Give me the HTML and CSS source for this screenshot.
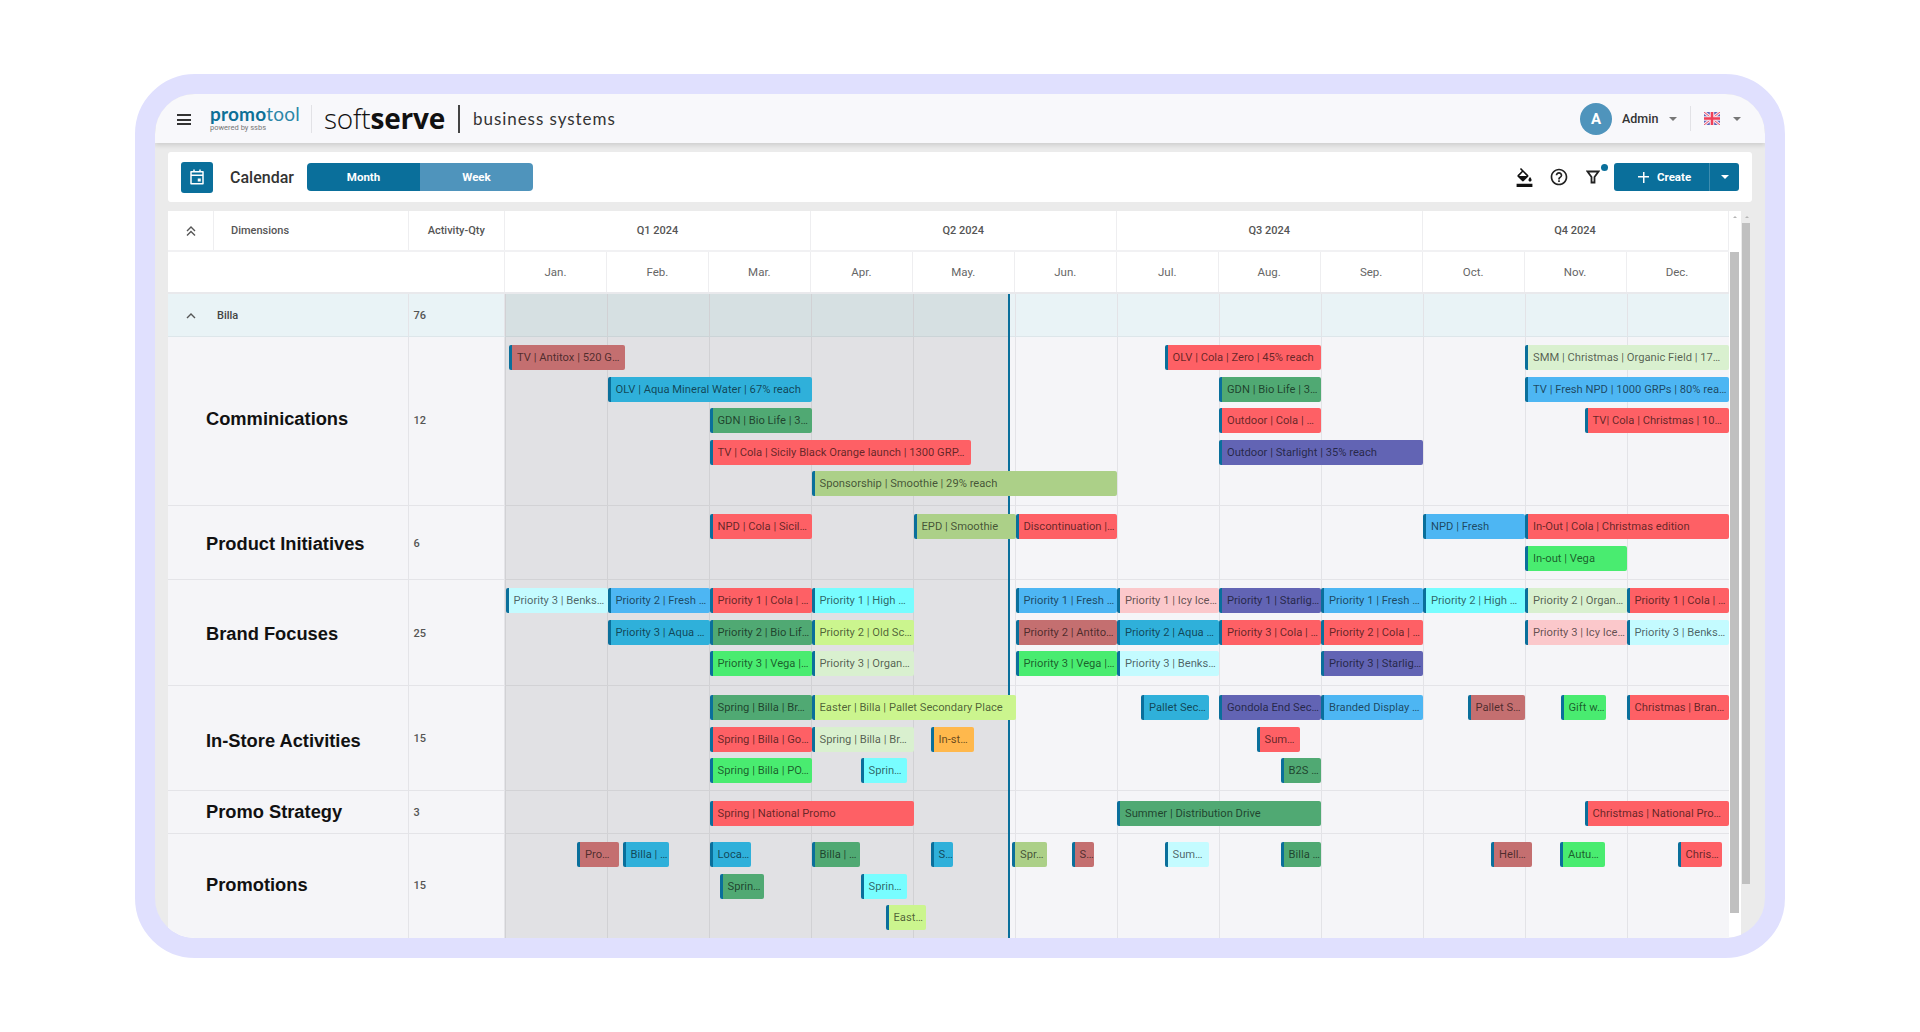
FILE: index.html
```html
<!DOCTYPE html>
<html lang="en">
<head>
<meta charset="utf-8">
<title>Promotool Calendar</title>
<link rel="stylesheet" href="styles.css">
</head>
<body>
<div class="frame">
  <header class="topbar">
    <div class="burger"><span></span><span></span><span></span></div>
    <div class="logo">
      <div class="logo-name"><b>promo</b>tool</div>
      <div class="logo-sub">powered by ssbs</div>
    </div>
    <div class="soft"><span class="soft-light">soft</span><span class="soft-bold">serve</span></div>
    <div class="biz">business systems</div>
    <div class="user">
      <div class="avatar">A</div>
      <div class="user-name">Admin</div>
      <span class="caret"></span>
      <div class="flag">
        <svg width="16" height="13" viewBox="0 0 16 13"><rect width="16" height="13" fill="#5a62b8"/><path d="M0 0L16 13M16 0L0 13" stroke="#f4e4ee" stroke-width="3"/><path d="M0 0L16 13M16 0L0 13" stroke="#f05068" stroke-width="1"/><path d="M8 0V13M0 6.5H16" stroke="#f4e4ee" stroke-width="4.5"/><path d="M8 0V13M0 6.5H16" stroke="#f04058" stroke-width="2.5"/></svg>
      </div>
      <span class="caret"></span>
    </div>
  </header>

  <main class="content">
    <div class="toolbar">
      <div class="cal-icon">
        <svg width="18" height="18" viewBox="0 0 24 24"><path fill="none" stroke="#fff" stroke-width="2" stroke-linejoin="round" d="M4 5h16v16H4zM4 9.500h16M8 2v4M16 2v4"/><rect x="13" y="14" width="4" height="4" fill="#fff"/></svg>
      </div>
      <div class="cal-title">Calendar</div>
      <div class="tabs"><div class="tab tab-on">Month</div><div class="tab">Week</div></div>
      <div class="tools">
        <svg class="ico-bucket" width="19" height="19" viewBox="0 0 24 24"><path fill="#111" d="M16.560 8.940L7.620 0 6.210 1.410l2.380 2.380-5.150 5.150c-.59.59-.59 1.540 0 2.120l5.500 5.500c.29.29.68.44 1.060.44s.77-.15 1.060-.44l5.500-5.500c.59-.58.59-1.530 0-2.120zM5.210 10L10 5.210 14.790 10H5.210zM19 11.500s-2 2.170-2 3.500c0 1.100.9 2 2 2s2-.9 2-2c0-1.330-2-3.500-2-3.500zM2 20h20v4H2z"/></svg>
        <svg class="ico-help" width="20" height="20" viewBox="0 0 24 24"><path fill="#222" d="M11 18h2v-2h-2v2zm1-16C6.480 2 2 6.480 2 12s4.480 10 10 10 10-4.480 10-10S17.520 2 12 2zm0 18c-4.410 0-8-3.590-8-8s3.590-8 8-8 8 3.590 8 8-3.590 8-8 8zm0-14c-2.210 0-4 1.790-4 4h2c0-1.100.9-2 2-2s2 .9 2 2c0 2-3 1.750-3 5h2c0-2.250 3-2.500 3-5 0-2.210-1.790-4-4-4z"/></svg>
        <div class="filter">
          <svg width="14" height="14" viewBox="0 0 14 14"><path fill="none" stroke="#222" stroke-width="1.800" d="M1.500 1.500h11L8.500 7v5.500h-3V7z"/></svg>
          <span class="filter-dot"></span>
        </div>
        <div class="create">
          <div class="create-main"><span class="plus"></span>Create</div>
          <div class="create-drop"><span class="caret caret-white"></span></div>
        </div>
      </div>
    </div>

    <div class="board">
      <div class="table">
        <div class="head head-q">
          <div class="hcell hcell-icon"><svg width="12" height="12" viewBox="0 0 12 12"><path fill="none" stroke="#555" stroke-width="1.400" d="M2 6l4-4 4 4M2 10.500l4-4 4 4"/></svg></div>
          <div class="hcell hcell-dim">Dimensions</div>
          <div class="hcell hcell-qty">Activity-Qty</div>
          <div class="quarters">
            <div class="q">Q1 2024</div><div class="q">Q2 2024</div><div class="q">Q3 2024</div><div class="q">Q4 2024</div>
          </div>
        </div>
        <div class="head head-m">
          <div class="spacer"></div>
          <div class="months">
            <div class="m">Jan.</div><div class="m">Feb.</div><div class="m">Mar.</div><div class="m">Apr.</div><div class="m">May.</div><div class="m">Jun.</div><div class="m">Jul.</div><div class="m">Aug.</div><div class="m">Sep.</div><div class="m">Oct.</div><div class="m">Nov.</div><div class="m">Dec.</div>
          </div>
        </div>

        <div class="body">
          <div class="past"></div>
          <div class="now"></div>

          <div class="row row-billa">
            <div class="label label-billa"><svg class="chev" width="12" height="12" viewBox="0 0 12 12"><path fill="none" stroke="#555" stroke-width="1.400" d="M2 8l4-4 4 4"/></svg>Billa</div>
            <div class="qty">76</div>
            <div class="track"></div>
          </div>

          <div class="row row-comm">
            <div class="label">Comminications</div>
            <div class="qty">12</div>
            <div class="track">
              <div class="lane">
                <div class="bar rosy" style="left:4px;width:116px">TV | Antitox | 520 G…</div>
                <div class="bar red" style="left:659.500px;width:156.500px">OLV | Cola | Zero | 45% reach</div>
                <div class="bar mint" style="left:1020px;width:203.500px">SMM | Christmas | Organic Field | 17…</div>
              </div>
              <div class="lane">
                <div class="bar aqua" style="left:102.500px;width:204px">OLV | Aqua Mineral Water | 67% reach</div>
                <div class="bar green" style="left:714px;width:102px">GDN | Bio Life | 3…</div>
                <div class="bar blue" style="left:1020px;width:203.500px">TV | Fresh NPD | 1000 GRPs | 80% rea…</div>
              </div>
              <div class="lane">
                <div class="bar green" style="left:204.500px;width:102px">GDN | Bio Life | 3…</div>
                <div class="bar red" style="left:714px;width:102px">Outdoor | Cola | …</div>
                <div class="bar red" style="left:1079.500px;width:144px">TV| Cola | Christmas | 10…</div>
              </div>
              <div class="lane">
                <div class="bar red" style="left:204.500px;width:261px">TV | Cola | Sicily Black Orange launch | 1300 GRP…</div>
                <div class="bar purple" style="left:714px;width:204px">Outdoor | Starlight | 35% reach</div>
              </div>
              <div class="lane">
                <div class="bar sage" style="left:306.500px;width:305.500px">Sponsorship | Smoothie | 29% reach</div>
              </div>
            </div>
          </div>

          <div class="row row-prod">
            <div class="label">Product Initiatives</div>
            <div class="qty">6</div>
            <div class="track">
              <div class="lane">
                <div class="bar red" style="left:204.500px;width:102px">NPD | Cola | Sicil…</div>
                <div class="bar sage" style="left:408.500px;width:102px">EPD | Smoothie</div>
                <div class="bar red" style="left:510.500px;width:101.500px">Discontinuation |…</div>
                <div class="bar blue" style="left:918px;width:102px">NPD | Fresh</div>
                <div class="bar red" style="left:1020px;width:203.500px">In-Out | Cola | Christmas edition</div>
              </div>
              <div class="lane">
                <div class="bar bright" style="left:1020px;width:101.500px">In-out | Vega</div>
              </div>
            </div>
          </div>

          <div class="row row-brand">
            <div class="label">Brand Focuses</div>
            <div class="qty">25</div>
            <div class="track">
              <div class="lane">
                <div class="bar ice" style="left:0.500px;width:102px">Priority 3 | Benks…</div>
                <div class="bar blue" style="left:102.500px;width:102px">Priority 2 | Fresh …</div>
                <div class="bar red" style="left:204.500px;width:102px">Priority 1 | Cola | …</div>
                <div class="bar cyan" style="left:306.500px;width:102px">Priority 1 | High …</div>
                <div class="bar blue" style="left:510.500px;width:101.500px">Priority 1 | Fresh …</div>
                <div class="bar pink" style="left:612px;width:102px">Priority 1 | Icy Ice…</div>
                <div class="bar purple" style="left:714px;width:102px">Priority 1 | Starlig…</div>
                <div class="bar blue" style="left:816px;width:102px">Priority 1 | Fresh …</div>
                <div class="bar cyan" style="left:918px;width:102px">Priority 2 | High …</div>
                <div class="bar mint" style="left:1020px;width:101.500px">Priority 2 | Organ…</div>
                <div class="bar red" style="left:1121.500px;width:102px">Priority 1 | Cola | …</div>
              </div>
              <div class="lane">
                <div class="bar aqua" style="left:102.500px;width:102px">Priority 3 | Aqua …</div>
                <div class="bar green" style="left:204.500px;width:102px">Priority 2 | Bio Lif…</div>
                <div class="bar lime" style="left:306.500px;width:102px">Priority 2 | Old Sc…</div>
                <div class="bar rosy" style="left:510.500px;width:101.500px">Priority 2 | Antito…</div>
                <div class="bar aqua" style="left:612px;width:102px">Priority 2 | Aqua …</div>
                <div class="bar red" style="left:714px;width:102px">Priority 3 | Cola | …</div>
                <div class="bar red" style="left:816px;width:102px">Priority 2 | Cola | …</div>
                <div class="bar pink" style="left:1020px;width:101.500px">Priority 3 | Icy Ice…</div>
                <div class="bar ice" style="left:1121.500px;width:102px">Priority 3 | Benks…</div>
              </div>
              <div class="lane">
                <div class="bar bright" style="left:204.500px;width:102px">Priority 3 | Vega |…</div>
                <div class="bar mint" style="left:306.500px;width:102px">Priority 3 | Organ…</div>
                <div class="bar bright" style="left:510.500px;width:101.500px">Priority 3 | Vega |…</div>
                <div class="bar ice" style="left:612px;width:102px">Priority 3 | Benks…</div>
                <div class="bar purple" style="left:816px;width:102px">Priority 3 | Starlig…</div>
              </div>
            </div>
          </div>

          <div class="row row-store">
            <div class="label">In-Store Activities</div>
            <div class="qty">15</div>
            <div class="track">
              <div class="lane">
                <div class="bar green" style="left:204.500px;width:102px">Spring | Billa | Br…</div>
                <div class="bar lime" style="left:306.500px;width:204px">Easter | Billa | Pallet Secondary Place</div>
                <div class="bar aqua" style="left:636px;width:68px">Pallet Sec…</div>
                <div class="bar purple" style="left:714px;width:102px">Gondola End Sec…</div>
                <div class="bar blue" style="left:816px;width:102px">Branded Display …</div>
                <div class="bar rosy" style="left:962.500px;width:57.500px">Pallet S…</div>
                <div class="bar bright" style="left:1055.500px;width:45px">Gift w…</div>
                <div class="bar red" style="left:1121.500px;width:102px">Christmas | Bran…</div>
              </div>
              <div class="lane">
                <div class="bar red" style="left:204.500px;width:102px">Spring | Billa | Go…</div>
                <div class="bar mint" style="left:306.500px;width:102px">Spring | Billa | Br…</div>
                <div class="bar orange" style="left:425.500px;width:43.500px">In-st…</div>
                <div class="bar red" style="left:751.500px;width:43.500px">Sum…</div>
              </div>
              <div class="lane">
                <div class="bar bright" style="left:204.500px;width:102px">Spring | Billa | PO…</div>
                <div class="bar cyan" style="left:355.500px;width:46px">Sprin…</div>
                <div class="bar green" style="left:775.500px;width:40.500px">B2S …</div>
              </div>
            </div>
          </div>

          <div class="row row-promo">
            <div class="label">Promo Strategy</div>
            <div class="qty">3</div>
            <div class="track">
              <div class="lane">
                <div class="bar red" style="left:204.500px;width:204px">Spring | National Promo</div>
                <div class="bar green" style="left:612px;width:204px">Summer | Distribution Drive</div>
                <div class="bar red" style="left:1079.500px;width:144px">Christmas | National Pro…</div>
              </div>
            </div>
          </div>

          <div class="row row-last">
            <div class="label">Promotions</div>
            <div class="qty">15</div>
            <div class="track">
              <div class="lane">
                <div class="bar rosy" style="left:72px;width:42px">Pro…</div>
                <div class="bar aqua" style="left:117.500px;width:46.500px">Billa | …</div>
                <div class="bar aqua" style="left:204.500px;width:41px">Loca…</div>
                <div class="bar green" style="left:306.500px;width:48.500px">Billa | …</div>
                <div class="bar aqua" style="left:425.500px;width:22px">S…</div>
                <div class="bar sage" style="left:507px;width:35px">Spr…</div>
                <div class="bar rosy" style="left:566.500px;width:22px">S…</div>
                <div class="bar ice" style="left:659.500px;width:44.500px">Sum…</div>
                <div class="bar green" style="left:775.500px;width:40.500px">Billa …</div>
                <div class="bar rosy" style="left:986px;width:40.500px">Hell…</div>
                <div class="bar bright" style="left:1055px;width:45px">Autu…</div>
                <div class="bar red" style="left:1172.500px;width:44.500px">Chris…</div>
              </div>
              <div class="lane">
                <div class="bar green" style="left:214.500px;width:44px">Sprin…</div>
                <div class="bar cyan" style="left:355.500px;width:46px">Sprin…</div>
              </div>
              <div class="lane">
                <div class="bar lime" style="left:380.500px;width:40.500px">East…</div>
              </div>
            </div>
          </div>
        </div>
      </div>

      <div class="scroll-inner"><div class="scroll-arrow"></div><div class="thumb-inner"></div></div>
      <div class="scroll-outer"><div class="scroll-arrow"></div><div class="thumb-outer"></div></div>
    </div>
  </main>
</div>
</body>
</html>
```

FILE: styles.css
```css
* { box-sizing: border-box; }
html, body { margin: 0; height: 100%; }
body {
  background: #fff;
  padding: 74px 135px 0;
  font-family: Roboto, "Liberation Sans", sans-serif;
  overflow: hidden;
}
.frame {
  width: 1650px;
  height: 884px;
  border: 20px solid #e0e0fe;
  border-radius: 60px;
  background: #ebebeb;
  overflow: hidden;
  display: flex;
  flex-direction: column;
}
.topbar {
  height: 49px;
  flex: none;
  background: #f8f8fb;
  box-shadow: 0 2px 5px rgba(0,0,0,.14);
  display: flex;
  align-items: center;
  padding-left: 22px;
  position: relative;
  z-index: 5;
}
.burger { width: 14px; display: flex; flex-direction: column; gap: 2.500px; margin-top: 2px; }
.burger span { display: block; height: 2px; background: #333; }
.logo { margin-left: 19px; width: 102px; flex: none; border-right: 1px solid #e2e2e6; height: 28px; display: flex; flex-direction: column; justify-content: center; }
.logo-name { font-family: Lato, sans-serif; font-size: 19px; line-height: 18px; color: #2c87a8; letter-spacing: .2px; font-weight: 400; }
.logo-name b { font-weight: 700; color: #0e7097; }
.logo-sub { font-family: Roboto, sans-serif; font-size: 7.500px; line-height: 9px; color: #777; }
.soft { margin-left: 12px; font-family: "Open Sans", sans-serif; font-size: 28px; color: #111; width: 136px; height: 28px; line-height: 26px; border-right: 2px solid #444; letter-spacing: -.2px; }
.soft-light { font-weight: 300; }
.soft-bold { font-weight: 700; }
.biz { margin-left: 13px; font-family: Lato, sans-serif; font-size: 17px; color: #333; letter-spacing: .95px; }
.user { margin-left: auto; display: flex; align-items: center; margin-right: 24px; }
.avatar { width: 32px; height: 32px; border-radius: 50%; background: #4f94bc; color: #fff; font-weight: 700; font-size: 15px; display: flex; align-items: center; justify-content: center; }
.user-name { margin-left: 10px; font-size: 12.500px; font-weight: 500; color: #333; width: 47px; }
.caret { display: inline-block; width: 0; height: 0; border-left: 4px solid transparent; border-right: 4px solid transparent; border-top: 4px solid #777; }
.caret-white { border-top-color: #fff; }
.flag { margin-left: 13px; padding-left: 13px; margin-right: 13px; border-left: 1px solid #e2e2e6; height: 25px; display: flex; align-items: center; }
.flag svg { display: block; }

.content { flex: 1; min-height: 0; padding: 9px 13px 0; display: flex; flex-direction: column; gap: 9px; }
.toolbar { height: 50px; flex: none; background: #fff; border-radius: 3px; display: flex; align-items: center; padding-left: 13px; }
.cal-icon { width: 32px; height: 31px; background: #0a6f9b; border-radius: 3px; display: flex; align-items: center; justify-content: center; }
.cal-title { margin-left: 17px; font-size: 16px; font-weight: 500; color: #333; width: 77px; }
.tabs { display: flex; width: 226px; height: 28px; border-radius: 4px; overflow: hidden; }
.tab { flex: 1; background: #4f94bc; color: #fff; font-size: 11.500px; font-weight: 700; display: flex; align-items: center; justify-content: center; }
.tab-on { background: #0a6f9b; }
.tools { margin-left: auto; display: flex; align-items: center; margin-right: 13px; }
.ico-bucket { margin-right: 15px; }
.ico-help { margin-right: 17px; }
.filter { position: relative; width: 14px; height: 14px; margin-right: 14px; display: flex; }
.filter-dot { position: absolute; left: 15px; top: -6px; width: 7px; height: 7px; border-radius: 50%; background: #0a6f9b; }
.create { display: flex; width: 125px; height: 28px; background: #0a6f9b; border-radius: 3px; color: #fff; font-size: 11.500px; font-weight: 700; }
.create-main { width: 96px; display: flex; align-items: center; padding-left: 24px; border-right: 1px solid #3d8db0; }
.plus { width: 11px; height: 11px; margin-right: 8px; background: linear-gradient(#fff,#fff) center/100% 1.500px no-repeat, linear-gradient(#fff,#fff) center/1.500px 100% no-repeat; }
.create-drop { flex: 1; display: flex; align-items: center; justify-content: center; }

.board { flex: 1; min-height: 0; display: flex; }
.table { width: 1560.500px; flex: none; background: #fff; display: flex; flex-direction: column; overflow: hidden; }
.head { display: flex; flex: none; font-size: 11px; color: #555; }
.head-q { height: 41px; font-weight: 500; border-bottom: 2px solid #f1f1f3; }
.head-m { height: 41.500px; border-bottom: 2px solid #e9e9ec; color: #666; font-size: 11.500px; }
.hcell { display: flex; align-items: center; border-right: 1px solid #eeeef0; }
.hcell-icon { width: 46px; justify-content: center; }
.hcell-dim { width: 194.500px; padding-left: 17px; }
.hcell-qty { width: 96.500px; justify-content: center; }
.spacer { width: 337px; border-right: 1px solid #eeeef0; }
.quarters, .months { flex: 1; display: grid; }
.quarters { grid-template-columns: repeat(4, 1fr); }
.months { grid-template-columns: repeat(12, 1fr); }
.q, .m { display: flex; align-items: center; justify-content: center; border-right: 1px solid #eeeef0; }

.body { position: relative; flex: 1; min-height: 0; background: #f5f5f8; }
.past { position: absolute; left: 337px; top: 0; bottom: 0; width: 503px; background: rgba(0,0,0,.08); z-index: 1; }
.now { position: absolute; left: 840px; top: 0; bottom: 0; width: 1.500px; background: #0a6f9b; z-index: 1; }
.row { display: grid; grid-template-columns: 240.500px 96.500px 1fr; border-bottom: 1px solid #e4e4e8; }
.row-billa { height: 43.500px; background: #e9f3f6; border-bottom-color: #dde6ea; }
.row-comm { height: 169px; }
.row-prod { height: 74px; }
.row-brand { height: 106px; }
.row-store { height: 105px; }
.row-promo { height: 43px; }
.row-last { height: 104px; border-bottom: 0; }
.label { display: flex; align-items: center; padding-left: 38px; font-family: "Liberation Sans", Arial, sans-serif; font-weight: 700; font-size: 18.300px; color: #111; border-right: 1px solid #e4e4e8; }
.row-comm .label { padding-bottom: 4px; }
.row-prod .label { padding-top: 2px; }
.row-brand .label { padding-top: 3px; }
.row-store .label { padding-top: 6px; }
.row-last .label { padding-bottom: 3px; }
.row-billa .label { padding-top: 2px; }
.row-billa .qty { padding-top: 2px; }
.row-comm .qty { padding-bottom: 2px; }
.row-brand .qty { padding-top: 2px; }
.row-prod .qty { padding-top: 2px; }
.row-last .qty { padding-bottom: 2px; }
.label-billa { font-family: Roboto, sans-serif; font-size: 11px; font-weight: 500; color: #444; padding-left: 17px; }
.chev { margin-right: 20px; }
.row-billa .label { border-right: 0; }
.qty { display: flex; align-items: center; padding-left: 5px; font-size: 11px; font-weight: 500; color: #555; border-left: 1px solid #e4e4e8; border-right: 1px solid #e4e4e8; margin-left: -1px; }
.track { padding-top: 8.300px; display: flex; flex-direction: column; gap: 6.500px; background-image: linear-gradient(to right, #e3e3e7 1px, transparent 1px); background-size: calc(100% / 12) 100%; }
.row-store .track { padding-top: 9px; }
.row-promo .track { padding-top: 10.300px; }
.lane { position: relative; height: 25px; flex: none; }
.bar {
  position: absolute;
  top: 0;
  height: 25px;
  z-index: 2;
  border-left: 3px solid #0a6f9b;
  border-radius: 2px;
  padding-left: 5px;
  font-size: 11.200px;
  line-height: 25px;
  white-space: nowrap;
  overflow: hidden;
  color: rgba(0,0,0,.62);
}
.rosy { background: #c46f70; }
.aqua { background: #2fb0da; }
.green { background: #50a973; }
.red { background: #fe6065; }
.sage { background: #acd088; }
.mint { background: #d9f0cf; }
.blue { background: #4db6f3; }
.purple { background: #6264b4; }
.bright { background: #49ec70; }
.cyan { background: #78fdff; }
.ice { background: #c4fbff; }
.pink { background: #fbc8cb; }
.lime { background: #cbf58e; }
.orange { background: #ffb84c; }

.scroll-inner { width: 12px; flex: none; background: #fff; padding-left: 1.500px; }
.scroll-outer { width: 11px; flex: none; padding-left: 1.500px; }
.scroll-arrow { width: 0; height: 0; margin: 5px 0 0 2.500px; border-left: 2px solid transparent; border-right: 2px solid transparent; border-bottom: 2px solid #b5b5b5; }
.thumb-inner { width: 8.500px; height: 661px; margin-top: 34px; background: #c0c0c0; }
.thumb-outer { width: 8px; height: 661px; margin-top: 5px; background: #c0c0c0; }
```
